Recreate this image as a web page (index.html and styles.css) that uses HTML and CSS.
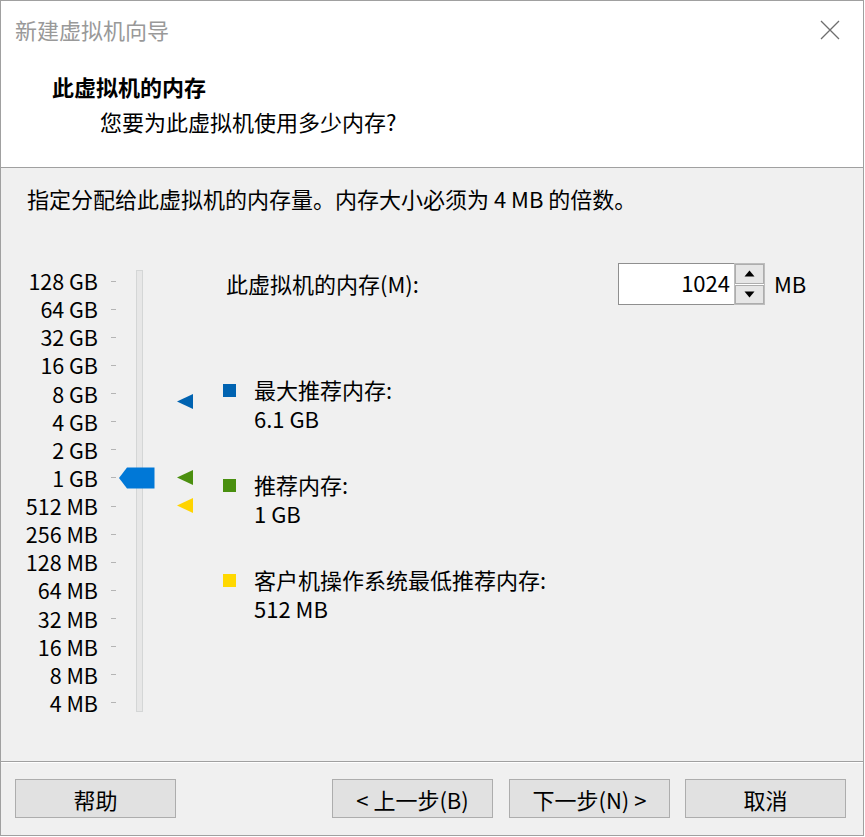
FILE: index.html
```html
<!DOCTYPE html>
<html lang="zh-CN">
<head>
<meta charset="utf-8">
<title>新建虚拟机向导</title>
<link rel="stylesheet" href="styles.css">
</head>
<body>
<div class="window">
  <div class="header">
    <div class="titlebar">
      <span class="title">新建虚拟机向导</span>
      <svg class="close" width="22" height="22" viewBox="0 0 22 22"><path d="M2 2 L20 20 M20 2 L2 20" stroke="#6e6e6e" stroke-width="1.3" fill="none"/></svg>
    </div>
    <div class="heading">此虚拟机的内存</div>
    <div class="subheading">您要为此虚拟机使用多少内存?</div>
  </div>
  <div class="content">
    <div class="desc">指定分配给此虚拟机的内存量。内存大小必须为 4 MB 的倍数。</div>
    <div class="main">
      <div class="scale">
        <div class="row"><span class="lbl">128 GB</span><span class="tick"></span></div>
        <div class="row"><span class="lbl">64 GB</span><span class="tick"></span></div>
        <div class="row"><span class="lbl">32 GB</span><span class="tick"></span></div>
        <div class="row"><span class="lbl">16 GB</span><span class="tick"></span></div>
        <div class="row"><span class="lbl">8 GB</span><span class="tick"></span></div>
        <div class="row"><span class="lbl">4 GB</span><span class="tick"></span></div>
        <div class="row"><span class="lbl">2 GB</span><span class="tick"></span></div>
        <div class="row"><span class="lbl">1 GB</span><span class="tick"></span></div>
        <div class="row"><span class="lbl">512 MB</span><span class="tick"></span></div>
        <div class="row"><span class="lbl">256 MB</span><span class="tick"></span></div>
        <div class="row"><span class="lbl">128 MB</span><span class="tick"></span></div>
        <div class="row"><span class="lbl">64 MB</span><span class="tick"></span></div>
        <div class="row"><span class="lbl">32 MB</span><span class="tick"></span></div>
        <div class="row"><span class="lbl">16 MB</span><span class="tick"></span></div>
        <div class="row"><span class="lbl">8 MB</span><span class="tick"></span></div>
        <div class="row"><span class="lbl">4 MB</span><span class="tick"></span></div>
        <div class="track"></div>
        <svg class="thumb" width="36" height="22" viewBox="0 0 36 22"><path d="M0 11 L8 0.5 L35.5 0.5 L35.5 21.5 L8 21.5 Z" fill="#0078d7"/></svg>
        <svg class="marker m-max" width="17" height="17" viewBox="0 0 17 17"><path d="M0 8.5 L16 1 L16 16 Z" fill="#0063b1"/></svg>
        <svg class="marker m-rec" width="17" height="17" viewBox="0 0 17 17"><path d="M0 8.5 L16 1 L16 16 Z" fill="#4b8f0f"/></svg>
        <svg class="marker m-min" width="17" height="17" viewBox="0 0 17 17"><path d="M0 8.5 L16 1 L16 16 Z" fill="#ffd400"/></svg>
      </div>
      <div class="right">
        <div class="mem-row">
          <span class="mem-label">此虚拟机的内存(M):</span>
          <div class="spin">
            <div class="spin-input">1024</div>
            <div class="spin-btns">
              <div class="spin-btn"><svg width="11" height="7" viewBox="0 0 11 7"><path d="M0.5 6.5 L5.5 0.5 L10.5 6.5 Z" fill="#000"/></svg></div>
              <div class="spin-btn"><svg width="11" height="7" viewBox="0 0 11 7"><path d="M0.5 0.5 L5.5 6.5 L10.5 0.5 Z" fill="#000"/></svg></div>
            </div>
          </div>
          <span class="unit">MB</span>
        </div>
        <div class="legend first">
          <span class="sq sq-max"></span>
          <div class="legend-text"><div>最大推荐内存:</div><div>6.1 GB</div></div>
        </div>
        <div class="legend">
          <span class="sq sq-rec"></span>
          <div class="legend-text"><div>推荐内存:</div><div>1 GB</div></div>
        </div>
        <div class="legend">
          <span class="sq sq-min"></span>
          <div class="legend-text"><div>客户机操作系统最低推荐内存:</div><div>512 MB</div></div>
        </div>
      </div>
    </div>
  </div>
  <div class="footer">
    <button class="btn">帮助</button>
    <span class="spacer"></span>
    <button class="btn">&lt; 上一步(B)</button>
    <button class="btn">下一步(N) &gt;</button>
    <button class="btn btn-cancel">取消</button>
  </div>
</div>
</body>
</html>
```
FILE: styles.css
```css
* { box-sizing: border-box; }
html, body { margin: 0; padding: 0; background: #ffffff; }
body {
  font-family: "Noto Sans CJK SC", "Microsoft YaHei", sans-serif;
  font-size: 22px;
  color: #000;
}
.window {
  width: 864px;
  height: 836px;
  border: 1px solid #a0a0a0;
  display: flex;
  flex-direction: column;
  background: #f0f0f0;
}
.header {
  height: 167px;
  background: #fff;
  border-bottom: 1px solid #a0a0a0;
  flex: none;
}
.titlebar {
  height: 61px;
  display: flex;
  align-items: center;
  justify-content: space-between;
  padding-left: 14px;
  padding-right: 22px;
  padding-bottom: 6px;
}
.title {
  color: #999999;
  font-size: 22px;
  line-height: 28px;
}
.close { display: block; margin-top: 2px; }
.heading {
  font-weight: bold;
  padding-left: 51px;
  margin-top: 10px;
  line-height: 28px;
}
.subheading {
  padding-left: 99px;
  margin-top: 7px;
  line-height: 28px;
}
.content {
  flex: 1;
  border-bottom: 1px solid #a0a0a0;
}
.desc {
  padding-left: 26px;
  margin-top: 16px;
  line-height: 28px;
}
.main {
  display: flex;
  margin-top: 51px;
}
.scale {
  position: relative;
  width: 222px;
  padding-top: 4px;
}
.row {
  display: flex;
  align-items: center;
  height: 28.13px;
}
.lbl {
  width: 97px;
  text-align: right;
  line-height: 22px;
  font-size: 21.5px;
}
.tick {
  width: 5px;
  height: 1px;
  margin-left: 13px;
  background: #b4b4b4;
}
.track {
  position: absolute;
  left: 135px;
  top: 7px;
  width: 7px;
  height: 442px;
  background: #e7e7e7;
  border: 1px solid #d4d6d6;
}
.thumb { position: absolute; left: 118px; top: 204px; }
.marker { position: absolute; left: 176px; }
.m-max { top: 130px; }
.m-rec { top: 206px; }
.m-min { top: 234px; }
.right { flex: 1; }
.mem-row {
  display: flex;
  align-items: center;
  height: 42px;
}
.mem-label {
  margin-left: 3px;
  width: 392px;
  line-height: 28px;
  margin-bottom: 3px;
}
.spin { display: flex; height: 42px; }
.spin-input {
  width: 116px;
  height: 42px;
  background: #fff;
  border: 1px solid #8f8f8f;
  border-right: none;
  text-align: right;
  padding-right: 4px;
  line-height: 37px;
}
.spin-btns {
  display: flex;
  flex-direction: column;
  gap: 1px;
  width: 31px;
  height: 42px;
  background: #fff;
  border: 1px solid #bdbdbd;
}
.spin-btn {
  flex: 1;
  background: #e6e6e6;
  border: 1px solid #adadad;
  display: flex;
  align-items: center;
  justify-content: center;
}
.spin-btn svg { display: block; }
.unit { margin-left: 9px; line-height: 28px; margin-bottom: 3px; }
.legend {
  display: flex;
  align-items: flex-start;
  margin-top: 37px;
}
.legend.first { margin-top: 70px; }
.sq {
  width: 13px;
  height: 13px;
  margin-top: 9px;
  margin-right: 18px;
  flex: none;
}
.sq-max { background: #0063b1; }
.sq-rec { background: #498f0f; }
.sq-min { background: #ffd800; }
.legend-text { line-height: 29px; }
.footer {
  flex: none;
  height: 73px;
  display: flex;
  align-items: flex-start;
  padding: 17px 17px 0 14px;
  gap: 16px;
  box-shadow: inset 0 1px 0 #ffffff;
}
.spacer { flex: 1; }
.btn-cancel { margin-left: -1px; }
.btn {
  width: 161px;
  height: 39px;
  background: #e1e1e1;
  border: 1px solid #adadad;
  font-family: "Noto Sans CJK SC", "Microsoft YaHei", sans-serif;
  font-size: 22px;
  color: #000;
  padding: 0;
  line-height: 36px;
}
```
